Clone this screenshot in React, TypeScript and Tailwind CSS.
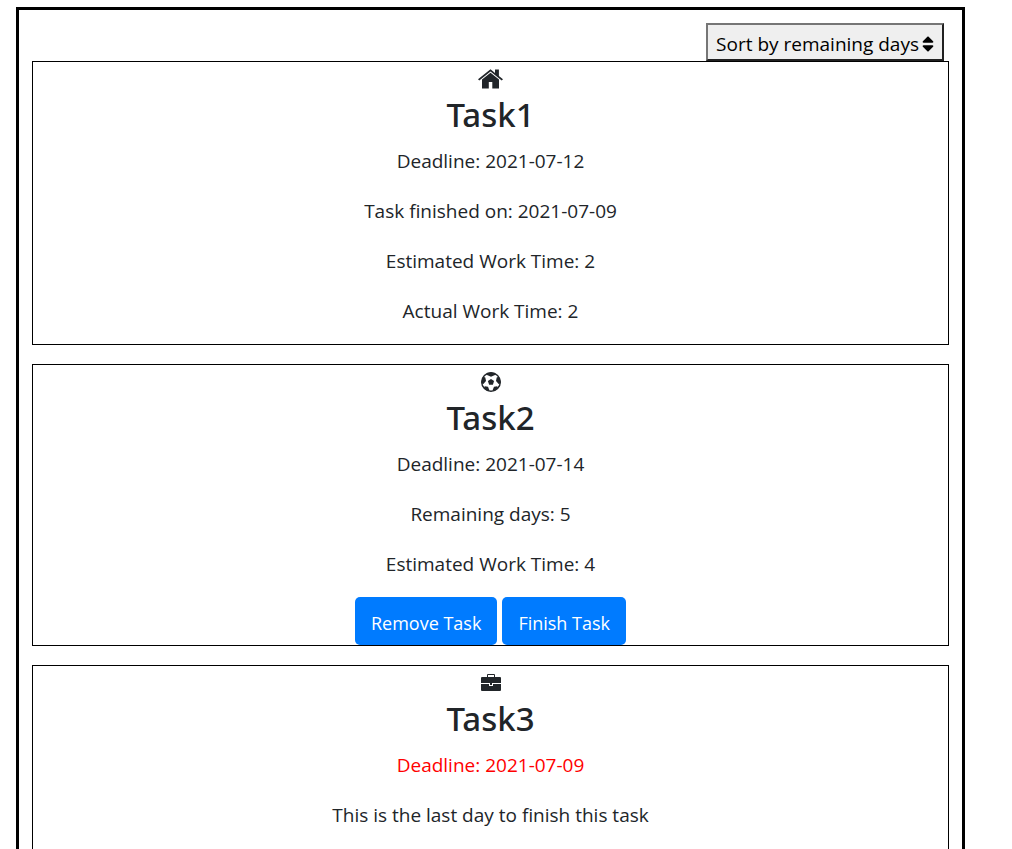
import type { ReactNode } from "react";
import { FaSort } from "react-icons/fa";

function HomeIcon() {
  return (
    <svg viewBox="0 0 25 20" className="h-5 w-[25px]" fill="currentColor" aria-hidden="true">
      <path d="M12.5 0.2 L17 3.9 V0.6 H20.9 V7.1 L25 10.3 L23.7 11.6 L12.5 2.6 L1.3 11.6 L0 10.3 Z" />
      <path d="M12.5 3.7 L21 10.5 V19.6 H14.3 V13 H10.8 V19.6 H4 V10.5 Z" />
    </svg>
  );
}

function BallIcon() {
  return (
    <svg viewBox="0 0 20 20" className="size-5" aria-hidden="true">
      <circle cx="10" cy="10" r="9.3" fill="none" stroke="currentColor" strokeWidth="1.4" />
      <g fill="currentColor">
        <path d="M10 6.9 L13.1 9.1 L11.9 12.8 H8.1 L6.9 9.1 Z" />
        <path d="M5.2 1.9 Q10 -0.9 14.8 1.9 L14 3 L10 4.8 L6 3 Z" />
        <path d="M0.7 11.6 Q0 7.6 2.4 4.8 L4.3 5.4 L5 9 L2.4 11.9 Z" />
        <path d="M19.3 11.6 Q20 7.6 17.6 4.8 L15.7 5.4 L15 9 L17.6 11.9 Z" />
        <path d="M3 15.4 L3.8 14.2 L7 14.8 L8.3 18 L7.4 19.3 Q4.6 18.3 3 15.4 Z" />
        <path d="M17 15.4 L16.2 14.2 L13 14.8 L11.7 18 L12.6 19.3 Q15.4 18.3 17 15.4 Z" />
      </g>
    </svg>
  );
}

function BriefcaseIcon() {
  return (
    <svg viewBox="0 0 20 20" className="size-5" fill="currentColor" aria-hidden="true">
      <path fillRule="evenodd" d="M6 4 V2 Q6 1 7 1 H13 Q14 1 14 2 V4 H19 Q20 4 20 5 V10 H0 V5 Q0 4 1 4 Z M7 2 V4 H13 V2 Z" />
      <path d="M0 11 H8 V13 H12 V11 H20 V17 Q20 18 19 18 H1 Q0 18 0 17 Z" />
      <path d="M9 10 H11 V12 H9 Z" />
    </svg>
  );
}

type Task = {
  name: string;
  icon: ReactNode;
  deadline: string;
  urgent?: boolean;
  details: string[];
  open?: boolean;
};

const tasks: Task[] = [
  {
    name: "Task1",
    icon: <HomeIcon />,
    deadline: "2021-07-12",
    details: ["Task finished on: 2021-07-09", "Estimated Work Time: 2", "Actual Work Time: 2"],
  },
  {
    name: "Task2",
    icon: <BallIcon />,
    deadline: "2021-07-14",
    details: ["Remaining days: 5", "Estimated Work Time: 4"],
    open: true,
  },
  {
    name: "Task3",
    icon: <BriefcaseIcon />,
    deadline: "2021-07-09",
    urgent: true,
    details: ["This is the last day to finish this task"],
  },
];

function ActionButton({ children }: { children: ReactNode }) {
  return (
    <button type="button" className="h-12 rounded-[5px] bg-[#007bff] px-4 pt-1 text-[18px] text-white">
      {children}
    </button>
  );
}

function TaskCard({ task }: { task: Task }) {
  return (
    <article className={`flex flex-col items-center border border-black ${task.urgent ? "pb-5" : ""}`}>
      <div className="flex h-8 items-center pt-[2px]">{task.icon}</div>
      <h3 className="mb-[10px] font-['Noto_Sans','Open_Sans',sans-serif] text-[33px] leading-[42px] font-medium">
        {task.name}
      </h3>
      <p className={task.urgent ? "mb-5 text-[#ff0000]" : "mb-5"}>Deadline: {task.deadline}</p>
      {task.details.map((line, i) => (
        <p key={line} className={i === task.details.length - 1 ? "mb-[18px]" : "mb-5"}>
          {line}
        </p>
      ))}
      {task.open && (
        <div className="flex gap-[5px]">
          <ActionButton>Remove Task</ActionButton>
          <ActionButton>Finish Task</ActionButton>
        </div>
      )}
    </article>
  );
}

export default function App() {
  return (
    <div className="bg-white pt-[7px] pr-[47px] pl-4 font-['Open_Sans','Noto_Sans',sans-serif] text-[19px] leading-[30px] text-[#212529]">
      <main className="border-3 border-black p-[13px]">
        <div className="flex justify-end pr-[5px]">
          <button
            type="button"
            className="flex h-[38px] items-center border-2 border-t-[#767676] border-r-[#212121] border-b-[#212121] border-l-[#767676] bg-[#efefef] px-2 pt-1 text-black"
          >
            Sort by remaining days
            <FaSort className="ml-[3px] h-5 w-3" aria-hidden="true" />
          </button>
        </div>
        <div className="flex flex-col gap-[19px]">
          {tasks.map((task) => (
            <TaskCard key={task.name} task={task} />
          ))}
        </div>
      </main>
    </div>
  );
}
